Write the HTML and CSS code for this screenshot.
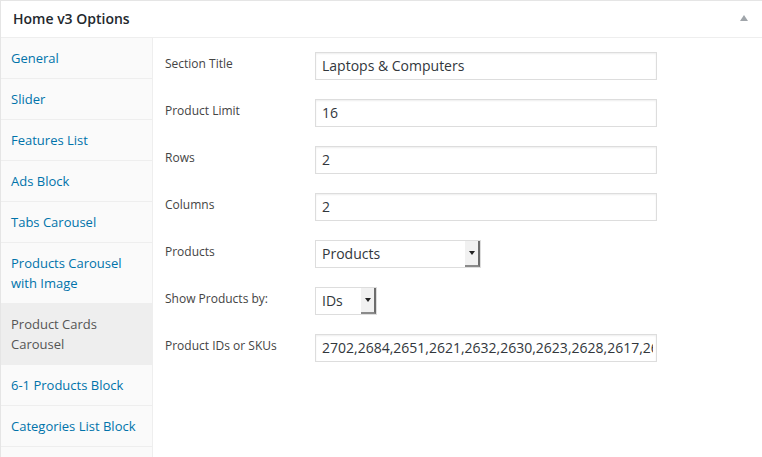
FILE: index.html
```html
<!DOCTYPE html>
<html>
<head>
<meta charset="utf-8">
<link rel="stylesheet" href="styles.css">
</head>
<body>
<div class="panel">
  <div class="panel-head">
    <h2 class="panel-title">Home v3 Options</h2>
    <span class="toggle"></span>
  </div>
  <div class="panel-body">
    <ul class="tabs">
      <li class="tab">General</li>
      <li class="tab">Slider</li>
      <li class="tab">Features List</li>
      <li class="tab">Ads Block</li>
      <li class="tab">Tabs Carousel</li>
      <li class="tab">Products Carousel with Image</li>
      <li class="tab active">Product Cards Carousel</li>
      <li class="tab">6-1 Products Block</li>
      <li class="tab">Categories List Block</li>
      <li class="tab empty"></li>
    </ul>
    <div class="fields">
      <div class="field">
        <label class="label">Section Title</label>
        <input class="text" type="text" value="Laptops &amp; Computers">
      </div>
      <div class="field">
        <label class="label">Product Limit</label>
        <input class="text" type="text" value="16">
      </div>
      <div class="field">
        <label class="label">Rows</label>
        <input class="text" type="text" value="2">
      </div>
      <div class="field">
        <label class="label">Columns</label>
        <input class="text" type="text" value="2">
      </div>
      <div class="field">
        <label class="label">Products</label>
        <div class="select select-wide">
          <span class="select-value">Products</span>
          <span class="select-arrow"></span>
        </div>
      </div>
      <div class="field">
        <label class="label">Show Products by:</label>
        <div class="select select-small">
          <span class="select-value">IDs</span>
          <span class="select-arrow"></span>
        </div>
      </div>
      <div class="field">
        <label class="label">Product IDs or SKUs</label>
        <input class="text" type="text" value="2702,2684,2651,2621,2632,2630,2623,2628,2617,2615,2611">
      </div>
    </div>
  </div>
</div>
</body>
</html>
```

FILE: styles.css
```css
* { box-sizing: border-box; }
html, body { margin: 0; padding: 0; background: #fff; }
body {
  font-family: "Open Sans", "Noto Sans", sans-serif;
  color: #444;
  overflow: hidden;
}
.panel {
  width: 780px;
  border-top: 1px solid #e5e5e5;
  border-left: 1px solid #e5e5e5;
  background: #fff;
}
.panel-head {
  height: 37px;
  border-bottom: 1px solid #eee;
  display: flex;
  align-items: center;
  padding-left: 12px;
  padding-right: 32px;
}
.panel-title {
  margin: 0;
  flex: 1;
  font-size: 14px;
  font-weight: 600;
  color: #23282d;
  line-height: 20px;
}
.toggle {
  width: 0;
  height: 0;
  border-left: 4px solid transparent;
  border-right: 4px solid transparent;
  border-bottom: 6px solid #a0a5aa;
  margin-top: -2px;
}
.panel-body {
  display: flex;
  align-items: stretch;
}
.tabs {
  list-style: none;
  margin: 0;
  padding: 0;
  width: 152px;
  flex: none;
  background: #fafafa;
  border-right: 1px solid #eee;
}
.tab {
  padding: 10px 10px 10px 10px;
  font-size: 13px;
  line-height: 20px;
  color: #0073aa;
  border-bottom: 1px solid #eee;
}
.tab.active {
  background: #eee;
  color: #555;
}
.tab.empty { height: 11px; padding: 0; border-bottom: none; }
.fields {
  flex: 1;
  padding: 14px 0 0 12px;
}
.field {
  display: flex;
  align-items: flex-start;
  margin-bottom: 19px;
}
.label {
  width: 150px;
  flex: none;
  font-size: 12px;
  line-height: 18px;
  padding-top: 3px;
  color: #444;
}
.text {
  width: 342px;
  height: 28px;
  margin: 0;
  border: 1px solid #ddd;
  box-shadow: inset 0 1px 2px rgba(0,0,0,0.07);
  background: #fff;
  font-family: "Open Sans", "Noto Sans", sans-serif;
  font-size: 14px;
  color: #32373c;
  padding: 0 3px 1px 6px;
  outline: none;
}
.select {
  height: 28px;
  display: flex;
  align-items: stretch;
  border: 1px solid #ddd;
  background: #fff;
}
.select-wide { width: 166px; }
.select-small { width: 62px; }
.select-value {
  flex: 1;
  font-size: 14px;
  line-height: 26px;
  padding-left: 6px;
  color: #32373c;
}
.select-arrow {
  width: 15px;
  flex: none;
  background: #f1f1f1;
  border-right: 2px solid #6d6d6d;
  border-bottom: 2px solid #8a8a8a;
  display: flex;
  align-items: center;
  justify-content: center;
}
.select-arrow::after {
  content: "";
  width: 0;
  height: 0;
  border-left: 3px solid transparent;
  border-right: 3px solid transparent;
  border-top: 4px solid #222;
}
```
